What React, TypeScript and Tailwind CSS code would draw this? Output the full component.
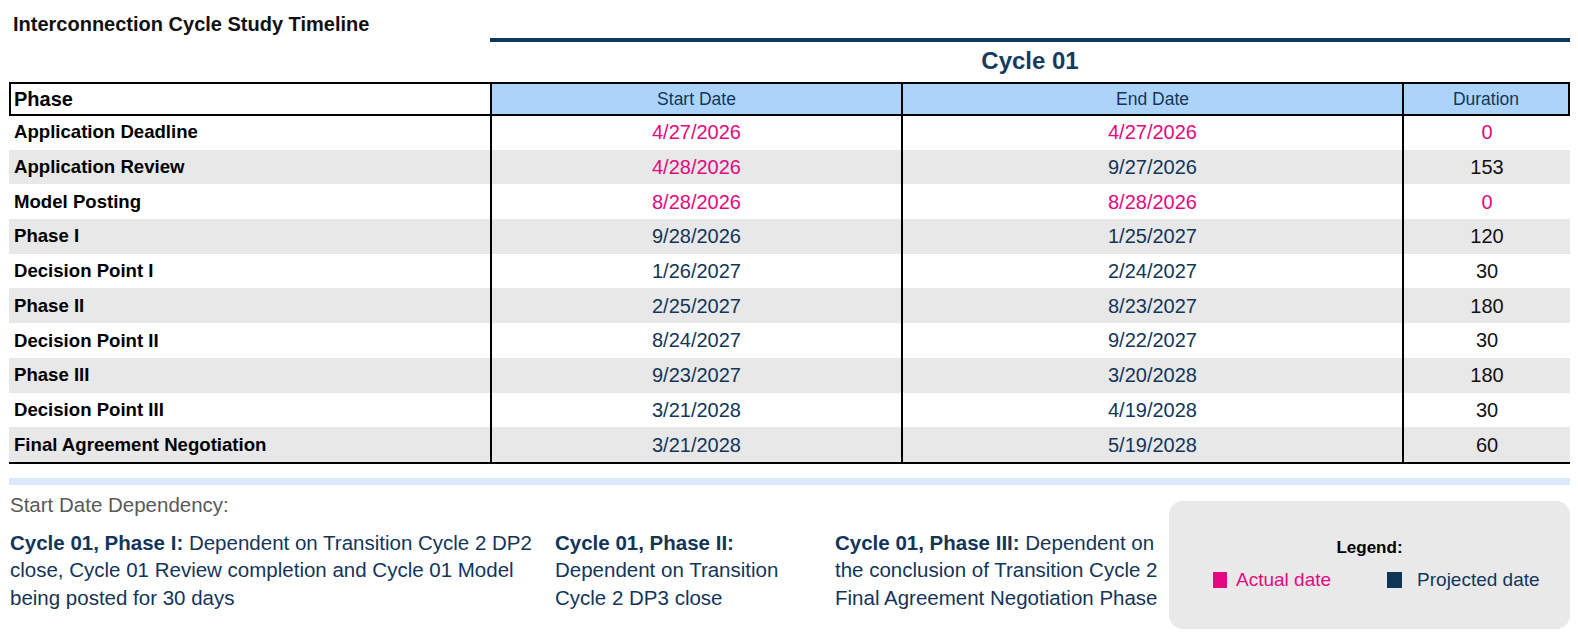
import React from "react";

const PINK = "text-[#e4097f]";
const NAVY = "text-[#13355a]";

type Row = {
  phase: string;
  start: string;
  end: string;
  duration: string;
  startActual?: boolean;
  endActual?: boolean;
  durActual?: boolean;
};

const rows: Row[] = [
  { phase: "Application Deadline", start: "4/27/2026", end: "4/27/2026", duration: "0", startActual: true, endActual: true, durActual: true },
  { phase: "Application Review", start: "4/28/2026", end: "9/27/2026", duration: "153", startActual: true },
  { phase: "Model Posting", start: "8/28/2026", end: "8/28/2026", duration: "0", startActual: true, endActual: true, durActual: true },
  { phase: "Phase I", start: "9/28/2026", end: "1/25/2027", duration: "120" },
  { phase: "Decision Point I", start: "1/26/2027", end: "2/24/2027", duration: "30" },
  { phase: "Phase II", start: "2/25/2027", end: "8/23/2027", duration: "180" },
  { phase: "Decision Point II", start: "8/24/2027", end: "9/22/2027", duration: "30" },
  { phase: "Phase III", start: "9/23/2027", end: "3/20/2028", duration: "180" },
  { phase: "Decision Point III", start: "3/21/2028", end: "4/19/2028", duration: "30" },
  { phase: "Final Agreement Negotiation", start: "3/21/2028", end: "5/19/2028", duration: "60" },
];

const cols = "grid-cols-[483px_411px_501px_166px]";

export default function App() {
  return (
    <div className="h-[637px] w-[1578px] overflow-hidden bg-white font-['Liberation_Sans',Arial,sans-serif]">
      <div className="pl-[13px] pt-[13px] text-[20px] font-bold leading-[22px] text-[#111]">
        Interconnection Cycle Study Timeline
      </div>

      <div className="ml-[490px] mt-[3px] h-[4px] w-[1080px] bg-[#0b3a5c]" />
      <div className="ml-[490px] flex h-[40px] w-[1080px] items-center justify-center pb-[3px] text-[24px] font-bold text-[#153b60]">
        Cycle 01
      </div>

      {/* table */}
      <div className="ml-[9px] w-[1561px]">
        <div className={`grid h-[33px] ${cols}`}>
          <div className="flex items-center border-2 border-black bg-white pl-[3px] text-[20px] font-bold text-black">
            Phase
          </div>
          <div className={`flex items-center justify-center border-y-2 border-r-2 border-black bg-[#acd4fb] text-[17.5px] ${NAVY}`}>
            Start Date
          </div>
          <div className={`flex items-center justify-center border-y-2 border-r-2 border-black bg-[#acd4fb] text-[17.5px] ${NAVY}`}>
            End Date
          </div>
          <div className={`flex items-center justify-center border-y-2 border-r-2 border-black bg-[#acd4fb] text-[17.5px] ${NAVY}`}>
            Duration
          </div>
        </div>
        <div className="border-b-2 border-black">
          {rows.map((r, i) => (
            <div
              key={r.phase}
              className={`grid h-[34.7px] ${cols} ${i % 2 === 1 ? "bg-[#e8e8e8]" : "bg-white"}`}
            >
              <div className="flex items-center border-r-2 border-black pl-[5px] text-[18.6px] font-bold text-black">
                {r.phase}
              </div>
              <div className={`flex items-center justify-center border-r-2 border-black text-[20px] ${r.startActual ? PINK : NAVY}`}>
                {r.start}
              </div>
              <div className={`flex items-center justify-center border-r-2 border-black text-[20px] ${r.endActual ? PINK : NAVY}`}>
                {r.end}
              </div>
              <div className={`flex items-center justify-center text-[20px] ${r.durActual ? PINK : "text-[#111]"}`}>
                {r.duration}
              </div>
            </div>
          ))}
        </div>
        <div className="mt-[14px] h-[7px] bg-[#dae9fb]" />
      </div>

      {/* dependencies + legend */}
      <div className="flex pl-[10px]">
        <div className="flex w-[1159px] shrink-0 flex-col pt-[5px]">
          <div className="text-[20.5px] leading-[30px] text-[#595959]">Start Date Dependency:</div>
          <div className={`mt-[9px] flex text-[20.5px] leading-[27.5px] ${NAVY}`}>
            <p className="w-[545px] shrink-0 whitespace-nowrap">
              <span className="font-bold">Cycle 01, Phase I:</span> Dependent on Transition Cycle 2 DP2
              <br />
              close, Cycle 01 Review completion and Cycle 01 Model
              <br />
              being posted for 30 days
            </p>
            <p className="w-[280px] shrink-0 whitespace-nowrap">
              <span className="font-bold">Cycle 01, Phase II:</span>
              <br />
              Dependent on Transition
              <br />
              Cycle 2 DP3 close
            </p>
            <p className="whitespace-nowrap">
              <span className="font-bold">Cycle 01, Phase III:</span> Dependent on
              <br />
              the conclusion of Transition Cycle 2
              <br />
              Final Agreement Negotiation Phase
            </p>
          </div>
        </div>
        <div className="mt-[16px] flex h-[128px] w-[401px] shrink-0 flex-col items-center justify-center rounded-[14px] bg-[#e9e9e9]">
          <div className="text-[17px] font-bold leading-[20px] text-black">Legend:</div>
          <div className="mt-[10px] flex w-full items-center pl-[44px] text-[19px] leading-[24px]">
            <span className="h-[16px] w-[14px] bg-[#e4097f]" />
            <span className="ml-[9px] text-[#e4097f]">Actual date</span>
            <span className="ml-[56px] h-[16px] w-[15px] bg-[#0c3556]" />
            <span className={`ml-[15px] ${NAVY}`}>Projected date</span>
          </div>
        </div>
      </div>
    </div>
  );
}
